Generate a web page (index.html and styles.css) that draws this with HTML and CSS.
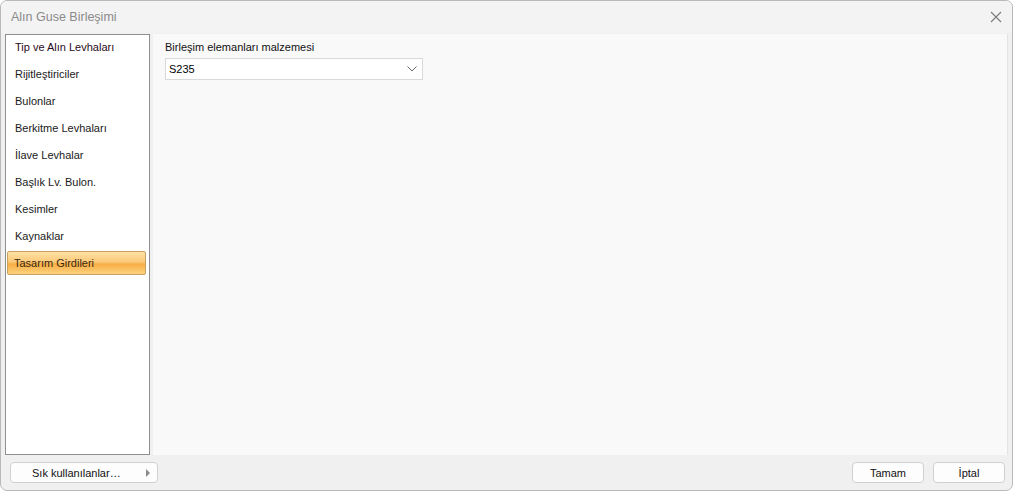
FILE: index.html
```html
<!DOCTYPE html>
<html>
<head>
<meta charset="utf-8">
<link rel="stylesheet" href="styles.css">
</head>
<body>
<div class="window">
  <div class="titlebar">
    <span class="title">Alın Guse Birleşimi</span>
    <svg class="close" width="12" height="12" viewBox="0 0 12 12"><path d="M1 1L11 11M11 1L1 11" stroke="#7a7a7a" stroke-width="1.1" fill="none"/></svg>
  </div>
  <div class="main">
    <div class="nav">
      <div class="item">Tip ve Alın Levhaları</div>
      <div class="item">Rijitleştiriciler</div>
      <div class="item">Bulonlar</div>
      <div class="item">Berkitme Levhaları</div>
      <div class="item">İlave Levhalar</div>
      <div class="item">Başlık Lv. Bulon.</div>
      <div class="item">Kesimler</div>
      <div class="item">Kaynaklar</div>
      <div class="item selected">Tasarım Girdileri</div>
    </div>
    <div class="content">
      <div class="label">Birleşim elemanları malzemesi</div>
      <div class="select">
        <span>S235</span>
        <svg width="10" height="6" viewBox="0 0 10 6"><path d="M0.5 0.5L5 5L9.5 0.5" stroke="#666" stroke-width="1" fill="none"/></svg>
      </div>
    </div>
  </div>
  <div class="footer">
    <div class="btn fav"><span>Sık kullanılanlar…</span><span class="tri"></span></div>
    <div class="right">
      <div class="btn">Tamam</div>
      <div class="btn">İptal</div>
    </div>
  </div>
</div>
</body>
</html>
```
FILE: styles.css
```css
html, body { margin: 0; padding: 0; }
body { width: 1013px; height: 491px; background: #fff; font-family: "Liberation Sans", "DejaVu Sans", sans-serif; font-size: 11px; color: #000; }
.window { box-sizing: border-box; width: 1013px; height: 491px; border: 1px solid #b9b9b9; border-radius: 7px; background: #f0f0f0; display: flex; flex-direction: column; overflow: hidden; }
.titlebar { height: 32px; flex: none; display: flex; align-items: center; justify-content: space-between; padding: 0 10px 0 10px; background: #f3f3f3; }
.title { font-size: 12.5px; color: #8a8a8a; }
.main { flex: 1; display: flex; padding: 1px 4px 0 4px; }
.nav { box-sizing: border-box; width: 145px; background: #fff; border: 1px solid #8f8f8f; padding: 0 3px 0 1px; display: flex; flex-direction: column; gap: 3px; }
.item { height: 24px; line-height: 24px; padding-left: 8px; color: #1a1a1a; }
.item:first-child { color: #2a0a1a; }
.item.selected { background: linear-gradient(#fde2a5 0%, #fcc878 45%, #f7ae46 55%, #fcd27d 100%); border: 1px solid #c8a060; border-radius: 2px; height: 22px; line-height: 22px; padding-left: 6px; color: #3a2a10; }
.content { flex: 1; margin-left: 3px; background: #f9f9f9; border-right: 1px solid #e4e4e4; padding: 7px 12px; }
.label { font-size: 11px; color: #111; margin-bottom: 5px; }
.select { width: 258px; height: 22px; box-sizing: border-box; background: #fff; border: 1px solid #d9d9d9; display: flex; align-items: center; justify-content: space-between; padding: 0 5px 0 3px; font-size: 11px; }
.footer { height: 35px; flex: none; display: flex; align-items: center; justify-content: space-between; padding: 0 7px 0 9px; }
.btn { box-sizing: border-box; height: 21px; border: 1px solid #d0d0d0; border-radius: 4px; background: #fdfdfd; display: flex; align-items: center; justify-content: center; width: 72px; font-size: 11px; color: #111; }
.fav { width: 148px; justify-content: flex-start; padding-left: 21px; position: relative; }
.tri { position: absolute; right: 7px; top: 6px; width: 0; height: 0; border-top: 4px solid transparent; border-bottom: 4px solid transparent; border-left: 4px solid #8a8a8a; }
.right { display: flex; gap: 9px; }
```
